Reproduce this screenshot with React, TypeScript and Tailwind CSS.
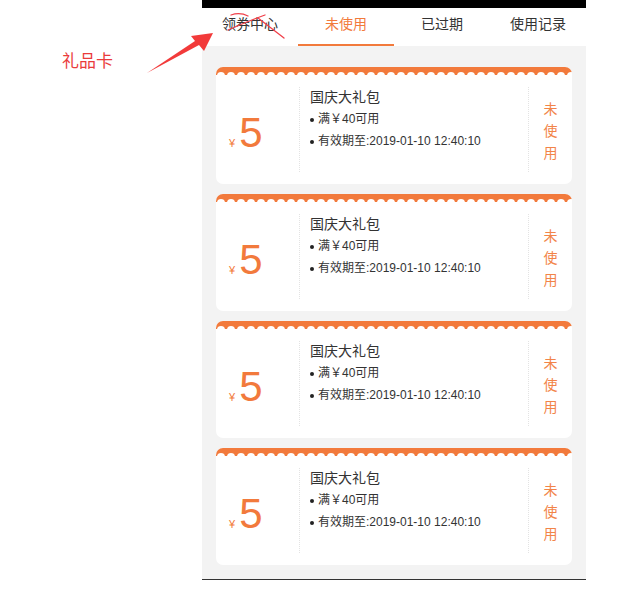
import * as React from "react";

const tabs = ["领券中心", "未使用", "已过期", "使用记录"];
const coupons = [1, 2, 3, 4];

const font = "font-['Liberation_Sans','Noto_Sans_CJK_SC',sans-serif]";

// Orange strip with scalloped bottom edge along the top of each card.
function Wave() {
  return (
    <svg className="block h-[8px] w-full" aria-hidden="true">
      <defs>
        <pattern id="scallop" width="10" height="8" patternUnits="userSpaceOnUse">
          <rect width="10" height="8" fill="#f27a3c" />
          <circle cx="5" cy="9" r="4" fill="#fff" />
        </pattern>
      </defs>
      <rect width="100%" height="8" fill="url(#scallop)" />
    </svg>
  );
}

function CouponCard() {
  return (
    <div className="overflow-hidden rounded-[7px] bg-white">
      <Wave />
      <div className="flex h-[109px]">
        <div className="flex w-[83px] items-center pl-[13px] pt-[6px]">
          <span className="flex items-baseline text-[#f27a3c]">
            <span className="mr-[4px] text-[11px]">¥</span>
            <span className="text-[42px] leading-none">5</span>
          </span>
        </div>
        <div className="my-[12px] border-l border-dotted border-[#e3e3e3]" />
        <div className="flex-1 pl-[10px] pt-[13px] text-[#333]">
          <p className="text-[14px] leading-[18px]">国庆大礼包</p>
          <p className="mt-[3px] flex items-center text-[12px] leading-[21px]">
            <span className="mr-[4px] h-[4px] w-[4px] rounded-full bg-[#222]" />
            满￥40可用
          </p>
          <p className="mt-[1px] flex items-center text-[12px] leading-[21px]">
            <span className="mr-[4px] h-[4px] w-[4px] rounded-full bg-[#222]" />
            有效期至:2019-01-10 12:40:10
          </p>
        </div>
        <div className="my-[12px] border-l border-dotted border-[#e3e3e3]" />
        <div className="flex w-[43px] flex-col items-center justify-center pt-[2px] text-[14px] leading-[22px] text-[#f28448]">
          <span>未</span>
          <span>使</span>
          <span>用</span>
        </div>
      </div>
    </div>
  );
}

export default function App() {
  return (
    <div className={`relative h-[610px] w-[628px] bg-white ${font}`}>
      <div className="ml-[202px] w-[384px]">
        <div className="h-[8px] bg-black" />
        <div className="flex h-[38px] bg-white">
          {tabs.map((t, i) => (
            <div key={t} className="flex flex-1 flex-col">
              <div
                className={`flex h-[32px] items-center justify-center text-[14px] ${
                  i === 1 ? "text-[#f27a3c]" : "text-[#333]"
                }`}
              >
                {t}
              </div>
              <div className="flex-1" />
              {i === 1 ? (
                <div className="h-[2px] bg-[#f27a3c]" />
              ) : (
                <div className="h-[2px]" />
              )}
            </div>
          ))}
        </div>
        <div className="flex flex-col gap-[10px] bg-[#f3f3f3] px-[14px] pb-[14px] pt-[21px]">
          {coupons.map((c) => (
            <CouponCard key={c} />
          ))}
        </div>
        <div className="h-px bg-[#333]" />
      </div>

      {/* Annotation overlay: label, arrow and scribble */}
      <span className="absolute left-[62px] top-[50px] text-[17px] leading-[24px] text-[#ea3b3b]">
        礼品卡
      </span>
      <svg
        className="pointer-events-none absolute left-0 top-0"
        width="628"
        height="610"
        aria-hidden="true"
      >
        <polygon
          points="147,73 195,41 191,36 213,33 204,51 199,45"
          fill="#f23a3a"
        />
        <g fill="none" stroke="#f0404a" strokeWidth="1.3" strokeLinecap="round">
          <path d="M231 15 Q240 12 248 16" />
          <path d="M228 30 Q246 22 265 15" />
          <path d="M258 18 Q271 28 284 38" />
        </g>
      </svg>
    </div>
  );
}
